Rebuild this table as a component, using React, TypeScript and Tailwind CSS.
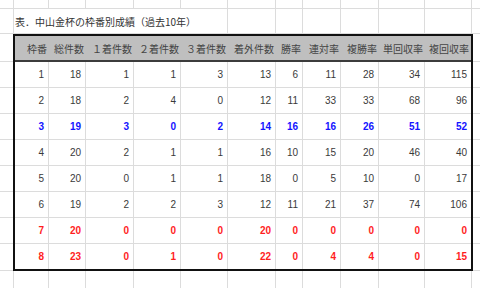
import React from "react";

const gridW = ["w-[14px]", "w-[35px]", "w-[37px]", "w-[48px]", "w-[47px]", "w-[47px]", "w-[48px]", "w-[27px]", "w-[38px]", "w-[38px]", "w-[46px]", "w-[47px]"];
const tblW = ["w-[34px]", "w-[37px]", "w-[48px]", "w-[47px]", "w-[47px]", "w-[48px]", "w-[27px]", "w-[38px]", "w-[38px]", "w-[46px]", "w-[46px]"];

const headers = ["枠番", "総件数", "１着件数", "２着件数", "３着件数", "着外件数", "勝率", "連対率", "複勝率", "単回収率", "複回収率"];

type Row = { v: number[]; tone: "normal" | "blue" | "red" };
const rows: Row[] = [
  { v: [1, 18, 1, 1, 3, 13, 6, 11, 28, 34, 115], tone: "normal" },
  { v: [2, 18, 2, 4, 0, 12, 11, 33, 33, 68, 96], tone: "normal" },
  { v: [3, 19, 3, 0, 2, 14, 16, 16, 26, 51, 52], tone: "blue" },
  { v: [4, 20, 2, 1, 1, 16, 10, 15, 20, 46, 40], tone: "normal" },
  { v: [5, 20, 0, 1, 1, 18, 0, 5, 10, 0, 17], tone: "normal" },
  { v: [6, 19, 2, 2, 3, 12, 11, 21, 37, 74, 106], tone: "normal" },
  { v: [7, 20, 0, 0, 0, 20, 0, 0, 0, 0, 0], tone: "red" },
  { v: [8, 23, 0, 1, 0, 22, 0, 4, 4, 0, 15], tone: "red" },
];

const toneCls = {
  normal: "text-[#3a3a3a]",
  blue: "text-[#1414ff] font-bold",
  red: "text-[#ff1e1e] font-bold",
};

function PlainRow({ h }: { h: string }) {
  return (
    <div className={`flex ${h}`}>
      {gridW.map((w, i) => (
        <div key={i} className={`${w} shrink-0 border-r border-b border-[#dcdcdc]`} />
      ))}
      <div className="flex-1 border-b border-[#dcdcdc]" />
    </div>
  );
}

export default function App() {
  return (
    <div className="w-[480px] h-[288px] overflow-hidden bg-white font-['Liberation_Sans','Noto_Sans_CJK_JP',sans-serif]">
      <PlainRow h="h-[9px]" />
      {/* title row */}
      <div className="flex h-[25px]">
        <div className="w-[14px] shrink-0 border-r border-b border-[#dcdcdc]" />
        <div className="w-[214px] shrink-0 border-r border-b border-[#dcdcdc] flex items-center pl-[1px] text-[10px] text-[#333] whitespace-nowrap font-['Noto_Sans_CJK_JP',sans-serif]">
          表．中山金杯の枠番別成績（過去10年）
        </div>
        {gridW.slice(6).map((w, i) => (
          <div key={i} className={`${w} shrink-0 border-r border-b border-[#dcdcdc]`} />
        ))}
        <div className="flex-1 border-b border-[#dcdcdc]" />
      </div>
      {/* header row */}
      <div className="flex h-[28px]">
        <div className="w-[13px] shrink-0 border-b border-[#dcdcdc]" />
        <div className="flex border-x-2 border-t-2 border-[#111] bg-[#bfbfbf]">
          {headers.map((t, i) => (
            <div
              key={i}
              className={`${tblW[i]} shrink-0 border-b-2 border-[#3c3c3c] flex items-center justify-end pr-[2px] text-[10px] text-[#444] whitespace-nowrap font-['Noto_Sans_CJK_JP',sans-serif]`}
            >
              {t}
            </div>
          ))}
        </div>
        <div className="flex-1 border-b border-[#dcdcdc]" />
      </div>
      {/* data rows */}
      {rows.map((r, ri) => {
        const last = ri === rows.length - 1;
        return (
          <div key={ri} className={`flex ${last ? "h-[27px]" : "h-[26px]"}`}>
            <div className="w-[13px] shrink-0 border-b border-[#dcdcdc]" />
            <div className={`flex border-x-2 border-[#111] ${last ? "border-b-2" : ""}`}>
              {r.v.map((n, i) => (
                <div
                  key={i}
                  className={`${tblW[i]} shrink-0 ${i < 10 ? "border-r" : ""} ${last ? "" : "border-b"} border-[#dcdcdc] flex items-center justify-end pr-[4px] text-[10px] ${toneCls[r.tone]}`}
                >
                  {n}
                </div>
              ))}
            </div>
            <div className="flex-1 border-b border-[#dcdcdc]" />
          </div>
        );
      })}
      <PlainRow h="h-[26px]" />
      <PlainRow h="h-[26px]" />
    </div>
  );
}
